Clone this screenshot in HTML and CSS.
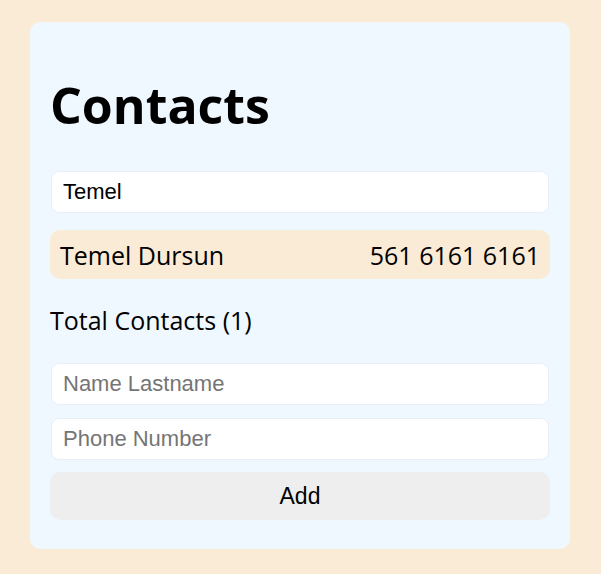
FILE: index.html
```html
<!DOCTYPE html>
<html>
<head>
<meta charset="utf-8">
<link rel="stylesheet" href="styles.css">
</head>
<body>
<div class="card">
  <h1 class="title">Contacts</h1>
  <input class="field" type="text" value="Temel">
  <ul class="list">
    <li class="item"><span>Temel Dursun</span><span>561 6161 6161</span></li>
  </ul>
  <p class="total">Total Contacts (1)</p>
  <form class="form">
    <input class="field" type="text" placeholder="Name Lastname">
    <input class="field" type="text" placeholder="Phone Number">
    <button class="btn" type="button">Add</button>
  </form>
</div>
</body>
</html>
```
FILE: styles.css
```css
html, body { margin: 0; padding: 0; }
body {
  background: #faebd7;
  font-family: "Open Sans", "Noto Sans", sans-serif;
  padding: 22px 0 25px 30px;
}
.card {
  width: 540px;
  box-sizing: border-box;
  background: #f0f8ff;
  border-radius: 10px;
  padding: 50px 20px 29px;
  display: flex;
  flex-direction: column;
}
.title {
  margin: 0 0 33px;
  font-size: 50px;
  line-height: 66px;
  font-weight: 700;
  color: #000;
}
.field {
  box-sizing: border-box;
  width: 498px;
  margin-left: 1px;
  height: 42px;
  border: 1px solid #e8eef5;
  border-radius: 8px;
  background: #fff;
  padding: 0 11px;
  font-family: "Liberation Sans", Arial, sans-serif;
  font-size: 22px;
  color: #000;
  outline: none;
}
.field::placeholder { color: #757575; }
.list { list-style: none; margin: 17px 0 0; padding: 0; }
.item {
  display: flex;
  justify-content: space-between;
  align-items: center;
  height: 49px;
  box-sizing: border-box;
  padding: 0 10px;
  background: #faebd7;
  border-radius: 10px;
  font-size: 25px;
  color: #000;
}
.total {
  margin: 24px 0 26px;
  font-size: 25px;
  line-height: 34px;
  color: #000;
}
.form { display: flex; flex-direction: column; gap: 13px; margin: 0; }
.btn {
  height: 48px;
  border: none;
  border-radius: 10px;
  background: #eeeeee;
  font-family: "Liberation Sans", Arial, sans-serif;
  font-size: 23px;
  color: #000;
  margin-top: -1px;
}
```
